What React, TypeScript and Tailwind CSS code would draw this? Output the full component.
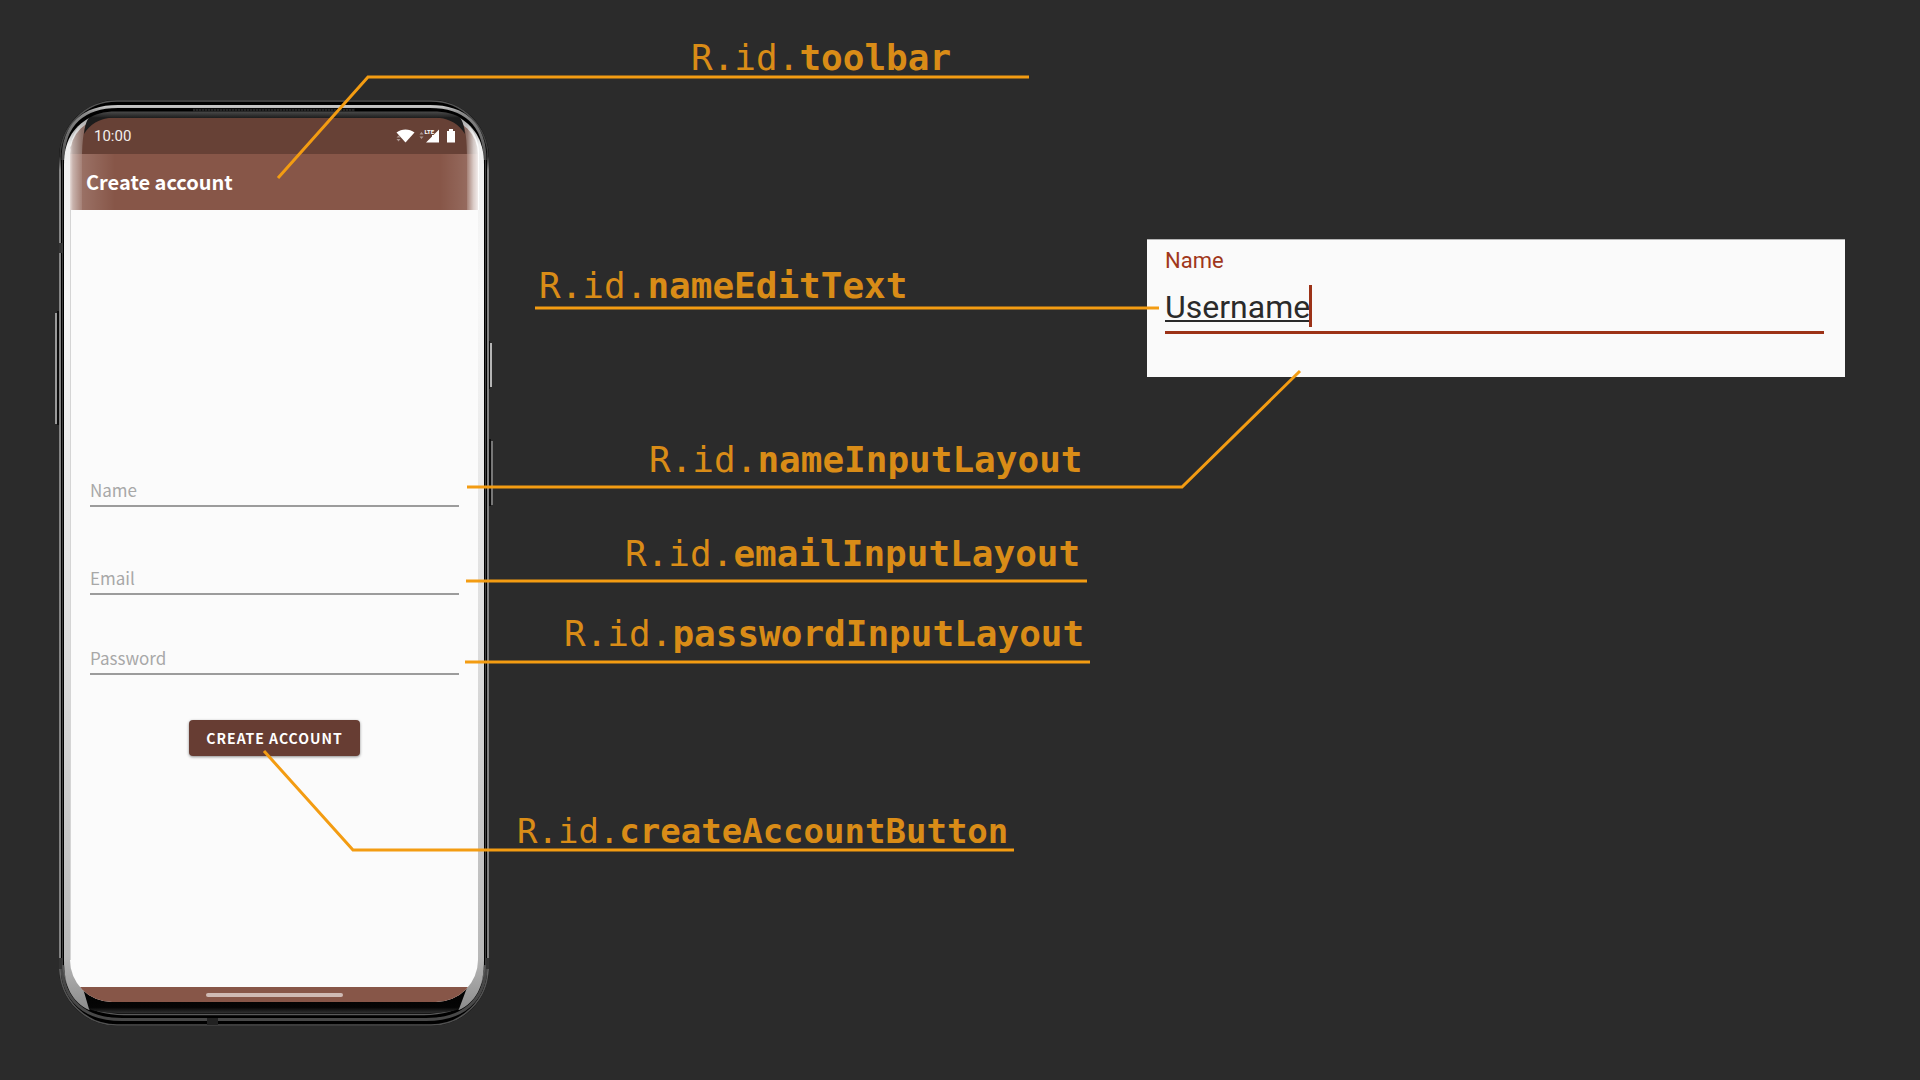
import React from "react";

const slate = "font-['Noto_Sans_CJK_SC',sans-serif]";

const labels = [
  { name: "toolbar", place: "left-[691px] top-[38px] text-[36px]" },
  { name: "nameEditText", place: "left-[539px] top-[266px] text-[36px]" },
  { name: "nameInputLayout", place: "left-[649px] top-[440px] text-[36px]" },
  { name: "emailInputLayout", place: "left-[625px] top-[534px] text-[36px]" },
  { name: "passwordInputLayout", place: "left-[564px] top-[614px] text-[36px]" },
  { name: "createAccountButton", place: "left-[517px] top-[811px] text-[34px]" },
];

const connectors = [
  "278,178 368,77 1029,77",
  "535,308 1159,308",
  "467,487 1182,487 1300,371",
  "466,581 1087,581",
  "465,662 1090,662",
  "264,751 353,850 1014,850",
];

function Chassis() {
  return (
    <svg
      className="pointer-events-none absolute inset-0 h-full w-full"
      viewBox="52 94 444 940"
      aria-hidden="true"
    >
      <defs>
        <linearGradient id="rail" x1="0" y1="0" x2="0" y2="1">
          <stop offset="0" stopColor="#555" />
          <stop offset="0.06" stopColor="#333" />
          <stop offset="0.075" stopColor="#a5a5a5" />
          <stop offset="0.93" stopColor="#a0a0a0" />
          <stop offset="0.95" stopColor="#555" />
          <stop offset="1" stopColor="#505050" />
        </linearGradient>
        <linearGradient id="inner" x1="0" y1="0" x2="0" y2="1">
          <stop offset="0" stopColor="#c4c4c4" />
          <stop offset="0.12" stopColor="#8a8a8a" />
          <stop offset="1" stopColor="#4a4a4a" />
        </linearGradient>
        <linearGradient id="topShade" x1="0" y1="0" x2="0" y2="1">
          <stop offset="0" stopColor="#4a4a4a" />
          <stop offset="1" stopColor="#161616" />
        </linearGradient>
        <linearGradient id="bottomShade" x1="0" y1="0" x2="0" y2="1">
          <stop offset="0" stopColor="#000" />
          <stop offset="0.8" stopColor="#050505" />
          <stop offset="1" stopColor="#303030" />
        </linearGradient>
        <linearGradient id="silver" x1="0" y1="0" x2="0" y2="1">
          <stop offset="0" stopColor="#8a8a8a" />
          <stop offset="0.03" stopColor="#f0f0f0" />
          <stop offset="0.2" stopColor="#f7f7f7" />
          <stop offset="0.6" stopColor="#dcdcdc" />
          <stop offset="0.94" stopColor="#b8b8b8" />
          <stop offset="1" stopColor="#8c8c8c" />
        </linearGradient>
      </defs>
      <rect x="55" y="313" width="2" height="111" fill="#9a9a9a" />
      <rect x="57" y="311" width="2" height="114" fill="#0c0c0c" />
      <rect x="490" y="343" width="2" height="44" fill="#b5b5b5" />
      <rect x="491" y="441" width="2" height="64" fill="#777" />
      <rect x="489" y="341" width="1" height="48" fill="#0c0c0c" />
      <rect x="489" y="439" width="2" height="67" fill="#0c0c0c" />
      <rect x="59" y="100" width="430" height="926" rx="58" fill="#000" />
      <rect x="60" y="101" width="428" height="924" rx="57" fill="none" stroke="url(#rail)" strokeWidth="1.6" />
      <path d="M62.500 160V965" stroke="#3c3c3c" />
      <path d="M485.500 160V965" stroke="#3c3c3c" />
      <path d="M61.500 965C63 1002 86 1019.500 122 1019.500H426C462 1019.500 485 1002 486.500 965" fill="none" stroke="#484848" strokeWidth="3" />
      <path d="M63 965C65 997 88 1014.500 124 1014.500H424C460 1014.500 483 997 485 965" fill="none" stroke="#5a5a5a" strokeWidth="1.500" />
      <path d="M63 160C63 124 84 106.500 118 106.500H430C464 106.500 485 124 485 160" fill="none" stroke="url(#inner)" strokeWidth="3" />
      <path d="M193 110H355" stroke="#111" strokeWidth="3" />
      <path d="M193 110H355" stroke="#3a3a3a" strokeWidth="1" strokeDasharray="2 1" />
      <path d="M88 119C94 114 104 111.500 116 111.500H432C446 111.500 456 114 462 119Z" fill="url(#topShade)" />
      <path d="M89 118C72 128 64 142 64 165V960C64 987 72 1002 89 1010L130 960V160Z" fill="url(#silver)" />
      <path d="M460 118C476 128 484 142 484 165V960C484 987 476 1002 459 1010L420 960V160Z" fill="url(#silver)" />
      <path d="M82 985L89 1009C98 1012.500 108 1013 124 1013H424C440 1013 450 1012.500 459 1009L468 985Z" fill="url(#bottomShade)" />
      <rect x="59" y="243" width="3" height="10" fill="#333" />
      <rect x="59" y="958" width="3" height="11" fill="#333" />
      <rect x="486" y="958" width="3" height="11" fill="#333" />
      <rect x="207" y="1018" width="11" height="7" fill="#222" />
    </svg>
  );
}

function Glass() {
  return (
    <svg
      className="pointer-events-none absolute inset-0 h-full w-full"
      viewBox="52 94 444 940"
      aria-hidden="true"
    >
      <defs>
        <linearGradient id="glassL" gradientUnits="userSpaceOnUse" x1="68" y1="0" x2="82" y2="0">
          <stop offset="0" stopColor="#fff" stopOpacity="0.95" />
          <stop offset="0.35" stopColor="#fff" stopOpacity="0.55" />
          <stop offset="1" stopColor="#fff" stopOpacity="0.25" />
        </linearGradient>
        <linearGradient id="glassR" gradientUnits="userSpaceOnUse" x1="480" y1="0" x2="467" y2="0">
          <stop offset="0" stopColor="#fff" stopOpacity="0.97" />
          <stop offset="0.5" stopColor="#fff" stopOpacity="0.7" />
          <stop offset="1" stopColor="#fff" stopOpacity="0.25" />
        </linearGradient>
        <linearGradient id="sheenL" gradientUnits="userSpaceOnUse" x1="82" y1="0" x2="115" y2="0">
          <stop offset="0" stopColor="#fff" stopOpacity="0.16" />
          <stop offset="1" stopColor="#fff" stopOpacity="0" />
        </linearGradient>
        <linearGradient id="sheenR" gradientUnits="userSpaceOnUse" x1="467" y1="0" x2="440" y2="0">
          <stop offset="0" stopColor="#fff" stopOpacity="0.12" />
          <stop offset="1" stopColor="#fff" stopOpacity="0" />
        </linearGradient>
      </defs>
      <path d="M89 118C84 124 82 140 82 160V210H70V150C72 134 78 124 89 118Z" fill="url(#glassL)" />
      <path d="M460 118C466 126 467 140 467 160V210H479V150C477 134 470 124 460 118Z" fill="url(#glassR)" />
      <path d="M89 117.500H112C99 119 90 124 84 134C85 126 86 122 89 117.500Z" fill="#1c1c1c" />
      <path d="M460 117.500H437C450 119 459 124 465 134C464 126 463 122 460 117.500Z" fill="#1c1c1c" />
      <path d="M82 154H115V210H82Z" fill="url(#sheenL)" />
      <path d="M440 154H467V210H440Z" fill="url(#sheenR)" />
      <path d="M70.500 210V960" stroke="#d5d5d5" />
    </svg>
  );
}

function StatusIcons() {
  return (
    <svg className="h-4 w-[60px]" viewBox="396 128 60 16" fill="#fff" role="img" aria-label="Wi-Fi, LTE signal, battery">
      <path d="M405.500 142.500L396.500 132.500C401.500 128.500 409.500 128.500 414.500 132.500Z" />
      <path d="M439 129.500V142.500H426L432 136.500V135H433.500Z" />
      <path d="M447 131H449V129H453V131H455V142.500H447Z" />
      <g opacity="0.45">
        <path d="M396.500 137.500L398.500 135.500L400.500 137.500ZM396.500 139L398.500 141.500L400.500 139Z" />
        <path d="M419.500 134.500L421.500 132L423.500 134.500ZM419.500 136.500L421.500 139L423.500 136.500Z" />
      </g>
      <text x="424.500" y="134" fontSize="6" fontWeight="700" fontFamily="Roboto, sans-serif">LTE</text>
    </svg>
  );
}

function Field({ id, label, type, gap }: { id: string; label: string; type: string; gap: string }) {
  return (
    <div className={gap}>
      <input
        id={id}
        type={type}
        aria-label={label}
        placeholder={label}
        className="block h-8 w-full border-b-2 border-[#9c9c9c] bg-transparent pb-0.5 text-[17px] leading-7 text-[#222] outline-none placeholder:text-[#a8a8a8]"
      />
    </div>
  );
}

function Phone() {
  return (
    <section className="relative mt-[94px] ml-[52px] h-[940px] w-[444px] shrink-0 px-[18px] pt-6 pb-8">
      <Chassis />
      <div className={`relative flex h-full flex-col overflow-hidden rounded-t-[36px] rounded-b-[42px] bg-[#fbfbfb] ${slate}`}>
        <div className="flex h-9 shrink-0 items-center justify-between bg-[#674136] pr-[22px] pl-6">
          <span className="font-[Roboto,sans-serif] text-[15px] leading-4 text-[#f3eeec]">10:00</span>
          <StatusIcons />
        </div>
        <header className="flex h-14 shrink-0 items-center bg-[#875648] px-4">
          <h1 className="text-[20px] leading-6 font-bold text-white">Create account</h1>
        </header>
        <form className="flex grow flex-col pt-[265px] pr-[19px] pl-5">
          <Field id="name" label="Name" type="text" gap="" />
          <Field id="email" label="Email" type="email" gap="mt-14" />
          <Field id="password" label="Password" type="password" gap="mt-12" />
          <button
            type="button"
            className="mt-[45px] h-9 w-[171px] self-center rounded bg-[#673d33] text-[14px] leading-5 font-bold tracking-[1px] text-white shadow-[0_1px_3px_rgba(0,0,0,0.45)]"
          >
            CREATE ACCOUNT
          </button>
        </form>
        <div className="flex h-[15px] shrink-0 items-center justify-center bg-[#875648]">
          <div className="h-1 w-[137px] rounded-full bg-[#cfbab4]" />
        </div>
      </div>
      <Glass />
    </section>
  );
}

function NameCard() {
  return (
    <section className="mt-[239px] mr-[75px] ml-auto h-[138px] w-[698px] border-t border-[#b4b4b4] bg-[#fafafa] px-[18px] pt-[7px] font-[Roboto,sans-serif]">
      <label htmlFor="username" className="block text-[22px] leading-7 text-[#a0371b]">Name</label>
      <div className="mt-2 mr-[3px] flex h-[51px] items-start border-b-[3px] border-[#9c3217]">
        <input
          id="username"
          type="text"
          defaultValue="Username"
          className="field-sizing-content h-12 bg-transparent text-[32px] leading-12 text-[#2a2a2a] underline decoration-2 underline-offset-2 outline-none"
        />
        <span className="mt-0.5 -ml-px h-[42px] w-[3px] bg-[#9c3217]" />
      </div>
    </section>
  );
}

export default function App() {
  return (
    <main className="relative flex min-h-screen items-start overflow-hidden bg-[#2b2b2b]">
      <Phone />
      <NameCard />
      <svg className="pointer-events-none absolute top-0 left-0 h-[1080px] w-[1920px]" viewBox="0 0 1920 1080" aria-hidden="true">
        {connectors.map((points) => (
          <polyline key={points} points={points} fill="none" stroke="#f39c12" strokeWidth="3" />
        ))}
      </svg>
      {labels.map(({ name, place }) => (
        <p
          key={name}
          className={`absolute font-['DejaVu_Sans_Mono',monospace] leading-10 whitespace-nowrap text-[#d98c17] ${place}`}
        >
          R.id.<b>{name}</b>
        </p>
      ))}
    </main>
  );
}
